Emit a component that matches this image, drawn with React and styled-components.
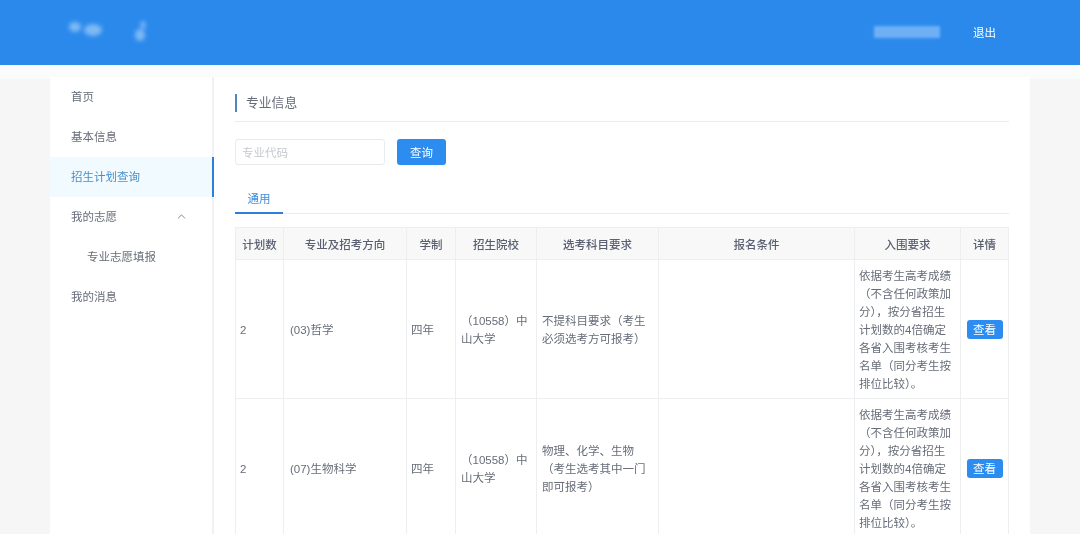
import React from "react";
import styled, { createGlobalStyle } from "styled-components";
import { ChevronUp } from "lucide-react";

const Global = createGlobalStyle`
  html, body { margin: 0; padding: 0; overflow: hidden; background: #f6f6f7; }
  body { font-family: "Liberation Sans", "Noto Sans CJK SC", sans-serif; color: #515a6e; }
  * { box-sizing: border-box; }
`;

const Page = styled.div`
  width: 1080px;
  height: 534px;
  overflow: hidden;
  background: linear-gradient(#fcfdfe 0, #fafcfc 79px, #f6f6f7 79px);
  filter: blur(0.35px);
`;
const Header = styled.header`
  height: 65px;
  background: #2b89ec;
  display: flex;
  align-items: center;
  justify-content: space-between;
  padding: 0 84px 0 64px;
`;
const Logo = styled.svg`
  width: 90px;
  height: 30px;
`;
const UserArea = styled.div`
  display: flex;
  align-items: center;
  gap: 33px;
  margin-bottom: 2px;
`;
const UserBlur = styled.div`
  width: 66px;
  height: 12px;
  background: #6fb0f5;
  filter: blur(1.5px);
`;
const Logout = styled.span`
  font-size: 11.5px;
  color: #fff;
`;
const Shell = styled.div`
  width: 980px;
  margin: 12px 0 0 50px;
  background: #fff;
  display: flex;
  align-items: stretch;
  min-height: 480px;
`;
const Side = styled.nav`
  width: 164px;
  flex: none;
  border-right: 2px solid #f0f1f3;
`;
const MenuItem = styled.div`
  height: 40px;
  display: flex;
  align-items: center;
  justify-content: space-between;
  padding: 0 24px 2px ${(p) => (p.$sub ? 37 : 21)}px;
  margin-right: -2px;
  font-size: 11.5px;
  color: ${(p) => (p.$active ? "#4a8fc9" : "#666c78")};
  background: ${(p) => (p.$active ? "#f0faff" : "transparent")};
  border-right: 2px solid ${(p) => (p.$active ? "#2d7fd8" : "transparent")};
`;
const Main = styled.main`
  flex: 1;
  padding: 15px 21px 0 21px;
`;
const TitleRow = styled.div`
  height: 30px;
  border-bottom: 1px solid #e9ebee;
  padding-top: 2px;
`;
const Title = styled.h2`
  margin: 0;
  height: 18px;
  border-left: 2px solid #4f88b8;
  padding-left: 9px;
  font-size: 12.8px;
  font-weight: 400;
  line-height: 18px;
  color: #666c78;
`;
const SearchRow = styled.div`
  display: flex;
  gap: 12px;
  margin-top: 17px;
`;
const Input = styled.input`
  width: 150px;
  height: 26px;
  border: 1px solid #e8eaec;
  border-radius: 3px;
  padding: 0 6px;
  font: 11.5px "Noto Sans CJK SC", sans-serif;
  outline: none;
  &::placeholder { color: #c5c8ce; }
`;
const SearchButton = styled.button`
  width: 49px;
  height: 26px;
  border: 0;
  border-radius: 3px;
  background: #2d8cf0;
  color: #fff;
  font: 11.5px "Noto Sans CJK SC", sans-serif;
`;
const Tabs = styled.div`
  margin-top: 21px;
  height: 28px;
  border-bottom: 1px solid #e9ebee;
  display: flex;
`;
const Tab = styled.div`
  width: 48px;
  height: 28px;
  border-bottom: 2px solid #2d7fd8;
  color: #3f8fdc;
  font-size: 11.5px;
  text-align: center;
  line-height: 26px;
`;
const Table = styled.table`
  margin-top: 13px;
  width: 774px;
  table-layout: fixed;
  border-collapse: collapse;
  font-size: 11.5px;
`;
const Th = styled.th`
  height: 32px;
  background: #f8f8f9;
  border: 1px solid #eceef0;
  font-weight: 500;
  color: #5a6070;
  padding: 0;
  text-align: center;
`;
const Td = styled.td`
  height: 139px;
  border: 1px solid #eceef0;
  padding: 1px 4px 0 ${(p) => p.$left ?? 4}px;
  line-height: 18px;
  color: #666c78;
  text-align: ${(p) => p.$align || "left"};
  word-break: break-all;
`;
const ViewButton = styled.button`
  width: 36px;
  height: 19px;
  padding: 0;
  border: 0;
  border-radius: 3px;
  background: #2d8cf0;
  color: #fff;
  font: 11.5px/19px "Noto Sans CJK SC", sans-serif;
`;

const widths = [48, 123, 49, 81, 122, 196, 106, 48];
const heads = ["计划数", "专业及招考方向", "学制", "招生院校", "选考科目要求", "报名条件", "入围要求", "详情"];
const req = "依据考生高考成绩（不含任何政策加分），按分省招生计划数的4倍确定各省入围考核考生名单（同分考生按排位比较）。";
const rows = [
  { major: "(03)哲学", subject: "不提科目要求（考生必须选考方可报考）" },
  { major: "(07)生物科学", subject: "物理、化学、生物（考生选考其中一门即可报考）" },
];

export default function App() {
  return (
    <Page>
      <Global />
      <Header>
        <Logo viewBox="0 0 90 30">
          <defs>
            <filter id="b" x="-50%" y="-50%" width="200%" height="200%"><feGaussianBlur stdDeviation="2.2" /></filter>
          </defs>
          <g fill="#7dbaf5" filter="url(#b)">
            <ellipse cx="11" cy="9" rx="6" ry="5" />
            <ellipse cx="29" cy="12" rx="9" ry="6" />
            <ellipse cx="79" cy="7" rx="2.5" ry="4" />
            <ellipse cx="76" cy="17" rx="5" ry="6" />
          </g>
        </Logo>
        <UserArea>
          <UserBlur />
          <Logout>退出</Logout>
        </UserArea>
      </Header>
      <Shell>
        <Side>
          <MenuItem>首页</MenuItem>
          <MenuItem>基本信息</MenuItem>
          <MenuItem $active>招生计划查询</MenuItem>
          <MenuItem>我的志愿<ChevronUp size={13} strokeWidth={1.5} /></MenuItem>
          <MenuItem $sub>专业志愿填报</MenuItem>
          <MenuItem>我的消息</MenuItem>
        </Side>
        <Main>
          <TitleRow><Title>专业信息</Title></TitleRow>
          <SearchRow>
            <Input placeholder="专业代码" />
            <SearchButton>查询</SearchButton>
          </SearchRow>
          <Tabs><Tab>通用</Tab></Tabs>
          <Table>
            <colgroup>{widths.map((w, i) => <col key={i} width={w} />)}</colgroup>
            <thead>
              <tr>{heads.map((h) => <Th key={h}>{h}</Th>)}</tr>
            </thead>
            <tbody>
              {rows.map((r) => (
                <tr key={r.major}>
                  <Td>2</Td>
                  <Td $left={6}>{r.major}</Td>
                  <Td>四年</Td>
                  <Td $left={5}>（10558）中山大学</Td>
                  <Td $left={5}>{r.subject}</Td>
                  <Td />
                  <Td>{req}</Td>
                  <Td $align="center"><ViewButton>查看</ViewButton></Td>
                </tr>
              ))}
            </tbody>
          </Table>
        </Main>
      </Shell>
    </Page>
  );
}
